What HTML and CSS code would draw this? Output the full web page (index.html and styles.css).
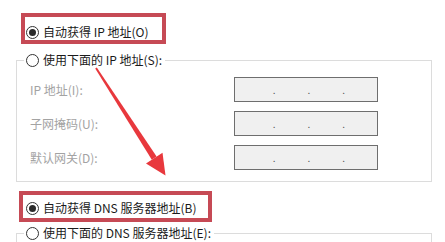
FILE: index.html
```html
<!DOCTYPE html>
<html lang="zh-CN">
<head>
<meta charset="utf-8">
<title>IP 设置</title>
<link rel="stylesheet" href="styles.css">
</head>
<body>
<div class="page">
  <div class="mark mark-1">
    <label class="opt"><span class="radio checked"></span><span class="txt">自动获得 IP 地址(O)</span></label>
  </div>

  <fieldset class="group">
    <legend class="opt"><span class="radio"></span><span class="txt">使用下面的 IP 地址(S):</span></legend>
    <div class="rows">
      <div class="row">
        <span class="lbl">IP 地址(I):</span>
        <div class="ipbox"><span class="seg"></span><span class="dot">.</span><span class="seg"></span><span class="dot">.</span><span class="seg"></span><span class="dot">.</span><span class="seg"></span></div>
      </div>
      <div class="row">
        <span class="lbl">子网掩码(U):</span>
        <div class="ipbox"><span class="seg"></span><span class="dot">.</span><span class="seg"></span><span class="dot">.</span><span class="seg"></span><span class="dot">.</span><span class="seg"></span></div>
      </div>
      <div class="row">
        <span class="lbl">默认网关(D):</span>
        <div class="ipbox"><span class="seg"></span><span class="dot">.</span><span class="seg"></span><span class="dot">.</span><span class="seg"></span><span class="dot">.</span><span class="seg"></span></div>
      </div>
    </div>
  </fieldset>

  <div class="mark mark-2">
    <label class="opt"><span class="radio checked"></span><span class="txt">自动获得 DNS 服务器地址(B)</span></label>
  </div>

  <fieldset class="group group-2">
    <legend class="opt"><span class="radio"></span><span class="txt">使用下面的 DNS 服务器地址(E):</span></legend>
    <div class="spacer"></div>
  </fieldset>

  <svg class="arrow" width="445" height="242" viewBox="0 0 445 242" aria-hidden="true">
    <polygon points="96.8,67.4 156.6,156.6 151.8,159.8 95.2,68.6" fill="#e8383d"/>
    <polygon points="162.5,152.8 165.5,175.5 146,163.6" fill="#e8383d"/>
  </svg>
</div>
</body>
</html>
```

FILE: styles.css
```css
html, body {
  margin: 0;
  padding: 0;
  background: #ffffff;
}

body {
  font-family: "Noto Sans CJK SC", "Noto Sans", sans-serif;
  font-size: 12px;
  color: #1a1a1a;
}

.page {
  position: relative;
  width: 445px;
  height: 242px;
  overflow: hidden;
}

.mark {
  box-sizing: border-box;
  border: 4px solid #c64a55;
  display: flex;
}

.mark-1 {
  width: 145px;
  height: 31px;
  margin: 13px 0 0 21px;
  padding: 8px 0 1px 1px;
}

.mark-2 {
  width: 193px;
  height: 31px;
  margin: 9px 0 0 19px;
  padding: 6px 0 3px 3px;
}

.opt {
  display: flex;
  align-items: center;
  gap: 4px;
  height: 14px;
  line-height: 14px;
  white-space: nowrap;
}

legend.opt {
  height: 18px;
  line-height: 18px;
  padding: 0 3px 0 2px;
}

.radio {
  box-sizing: border-box;
  width: 13px;
  height: 13px;
  border: 1px solid #333333;
  border-radius: 50%;
  background: #ffffff;
  display: flex;
  align-items: center;
  justify-content: center;
  flex: none;
}

.radio.checked::after {
  content: "";
  width: 7px;
  height: 7px;
  border-radius: 50%;
  background: #2b2b2b;
}

.group {
  box-sizing: border-box;
  width: 416px;
  margin: 7px 0 0 16px;
  padding: 8px 0 11px 7px;
  border: 1px solid #dcdcdc;
  min-inline-size: 0;
}

.group-2 {
  margin-top: 2px;
}

.spacer {
  height: 40px;
}

.rows {
  display: flex;
  flex-direction: column;
  gap: 9px;
}

.row {
  display: grid;
  grid-template-columns: 204px 144px;
  align-items: center;
  margin-left: 6px;
}

.lbl {
  color: #a3a3a3;
  white-space: nowrap;
}

.ipbox {
  box-sizing: border-box;
  height: 25px;
  border: 1px solid #6e6e6e;
  background: #f0f0f0;
  display: flex;
  align-items: center;
  padding-left: 6px;
}

.seg {
  flex: 1;
}

.dot {
  width: 3px;
  text-align: center;
  color: #555555;
  font-size: 10px;
  line-height: 10px;
}

.arrow {
  position: absolute;
  left: 0;
  top: 0;
  pointer-events: none;
}
```
